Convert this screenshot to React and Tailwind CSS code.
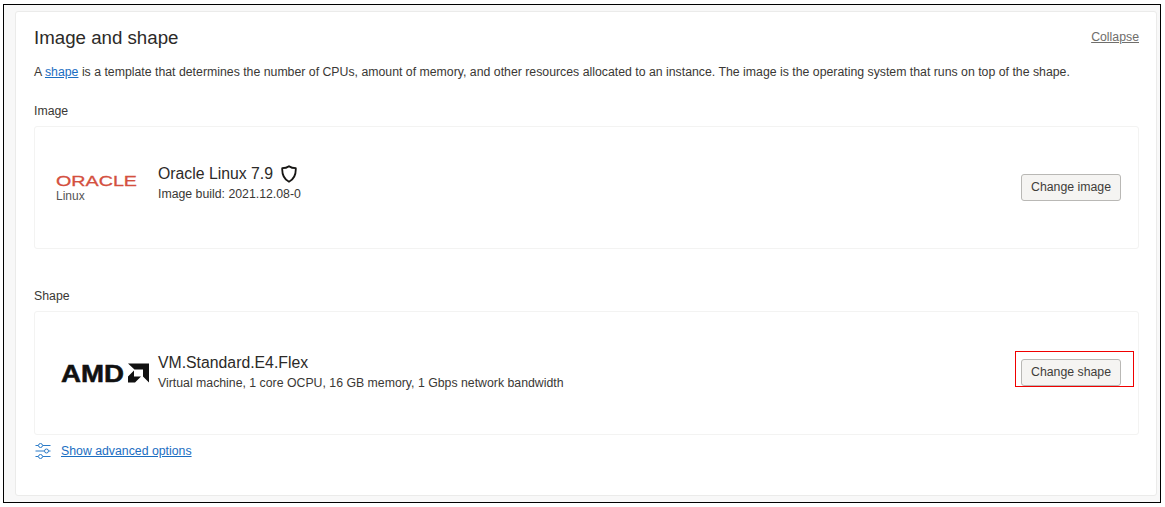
import React from "react";

const sans = "font-['Liberation_Sans',Arial,sans-serif]";

const OracleLogo = () => (
    <div className="w-[123px] shrink-0 pl-[21px]">
        <svg width="84" height="13" viewBox="0 0 84 13" className="block overflow-visible">
            <text x="0" y="11.7" fontFamily="Liberation Sans, Arial, sans-serif" fontSize="14.7" fill="#d4503f" stroke="#d4503f" strokeWidth="0.3" textLength="81" lengthAdjust="spacingAndGlyphs">ORACLE</text>
        </svg>
        <div className="text-[12px] leading-[14px] text-[#555] mt-[2px]">Linux</div>
    </div>
);

const AmdLogo = () => (
    <div className="w-[123px] shrink-0 pl-[26px]">
        <svg width="90" height="21" viewBox="0 0 90 21" className="block overflow-visible">
            <text x="0" y="18.5" fontFamily="Liberation Sans, Arial, sans-serif" fontWeight="700" fontSize="23" fill="#111" stroke="#111" strokeWidth="0.5" textLength="63" lengthAdjust="spacingAndGlyphs">AMD</text>
            <path d="M67 0.5H88V19.5L82 13.5V6.5H73.5Z" fill="#111" />
            <path d="M73 7.5L67 13.5V19.5H74L80 13.5H73Z" fill="#111" />
        </svg>
    </div>
);

const ShieldIcon = () => (
    <svg width="16" height="18" viewBox="0 0 16 18" fill="none" stroke="#161513" strokeWidth="1.8" strokeLinejoin="round" className="block">
        <path d="M8 1.2C10 2.7 12.2 3.2 14.8 3.2C15 8.8 13.4 14 8 16.8C2.6 14 1 8.8 1.2 3.2C3.8 3.2 6 2.7 8 1.2Z" />
    </svg>
);

const SlidersIcon = () => (
    <svg width="16" height="16" viewBox="0 0 16 16" fill="none" stroke="#2b7bc8" strokeWidth="1" className="block">
        <path d="M0.5 2.5H3M8 2.5H15.5M0.5 8H9M14 8H15.5M0.5 13.5H3M8 13.5H15.5" />
        <circle cx="5.5" cy="2.5" r="2" />
        <circle cx="11.5" cy="8" r="2" />
        <circle cx="5.5" cy="13.5" r="2" />
    </svg>
);

const ResourceCard = ({ logo, title, titleExtra, detail, button, outlined, height, textTop }) => (
    <div className={`flex items-start border border-[#f3f3f2] rounded-[3px] ${height}`}>
        {logo}
        <div className={`flex-1 ${textTop}`}>
            <div className="flex items-center gap-[8px] text-[15.8px] leading-[20px] text-[#2c2a28]">
                {title}
                {titleExtra}
            </div>
            <div className="text-[12.3px] leading-[21px] text-[#3a3835]">{detail}</div>
        </div>
        <div className="relative mt-[47px] mr-[17px]">
            <button className="block h-[27px] w-[100px] text-[12.3px] text-[#3f3d3a] bg-[#f5f4f2] border border-[#b9b8b5] rounded-[3px]">
                {button}
            </button>
            {outlined && <div className="absolute left-[-6px] top-[-8px] h-[36px] w-[119px] border border-[#f00000]" />}
        </div>
    </div>
);

const App = () => {
    return (
        <div className={`h-[507px] w-[1165px] bg-white pt-[4px] pl-[3px] ${sans}`}>
            <div className="h-[499px] w-[1158px] border border-black bg-[#f8f8f8] pl-[11px] pr-[3px] pt-[6px] pb-[6px]">
                <div className="h-full bg-white border border-[#ebebea] rounded-[3px] pl-[18px] pr-[17px] pt-[14px]">
                    <div className="flex items-start justify-between">
                        <h2 className="text-[18.7px] leading-[24px] text-[#2c2a28]">Image and shape</h2>
                        <a className="text-[12.3px] leading-[16px] mt-[3px] text-[#6f6e6b] underline">Collapse</a>
                    </div>
                    <p className="mt-[14px] text-[12.3px] leading-[16px] text-[#3a3835]">
                        A <a className="text-[#1b6ec2] underline">shape</a> is a template that determines the number of CPUs, amount of memory, and other resources allocated to an instance. The image is the operating system that runs on top of the shape.
                    </p>
                    <div className="mt-[23px] text-[12.3px] leading-[16px] text-[#3a3835]">Image</div>
                    <div className="mt-[7px]">
                        <ResourceCard
                            logo={<div className="pt-[47px]"><OracleLogo /></div>}
                            title="Oracle Linux 7.9"
                            titleExtra={<ShieldIcon />}
                            detail="Image build: 2021.12.08-0"
                            button="Change image"
                            height="h-[123px]"
                            textTop="pt-[37px]"
                        />
                    </div>
                    <div className="mt-[39px] text-[12.3px] leading-[16px] text-[#3a3835]">Shape</div>
                    <div className="mt-[7px]">
                        <ResourceCard
                            logo={<div className="pt-[51px]"><AmdLogo /></div>}
                            title="VM.Standard.E4.Flex"
                            detail="Virtual machine, 1 core OCPU, 16 GB memory, 1 Gbps network bandwidth"
                            button="Change shape"
                            outlined
                            height="h-[124px]"
                            textTop="pt-[41px]"
                        />
                    </div>
                    <div className="mt-[8px] flex items-center gap-[10px] pl-[1px]">
                        <SlidersIcon />
                        <a className="text-[12.3px] leading-[16px] text-[#1b6ec2] underline">Show advanced options</a>
                    </div>
                </div>
            </div>
        </div>
    );
};

export default App;
